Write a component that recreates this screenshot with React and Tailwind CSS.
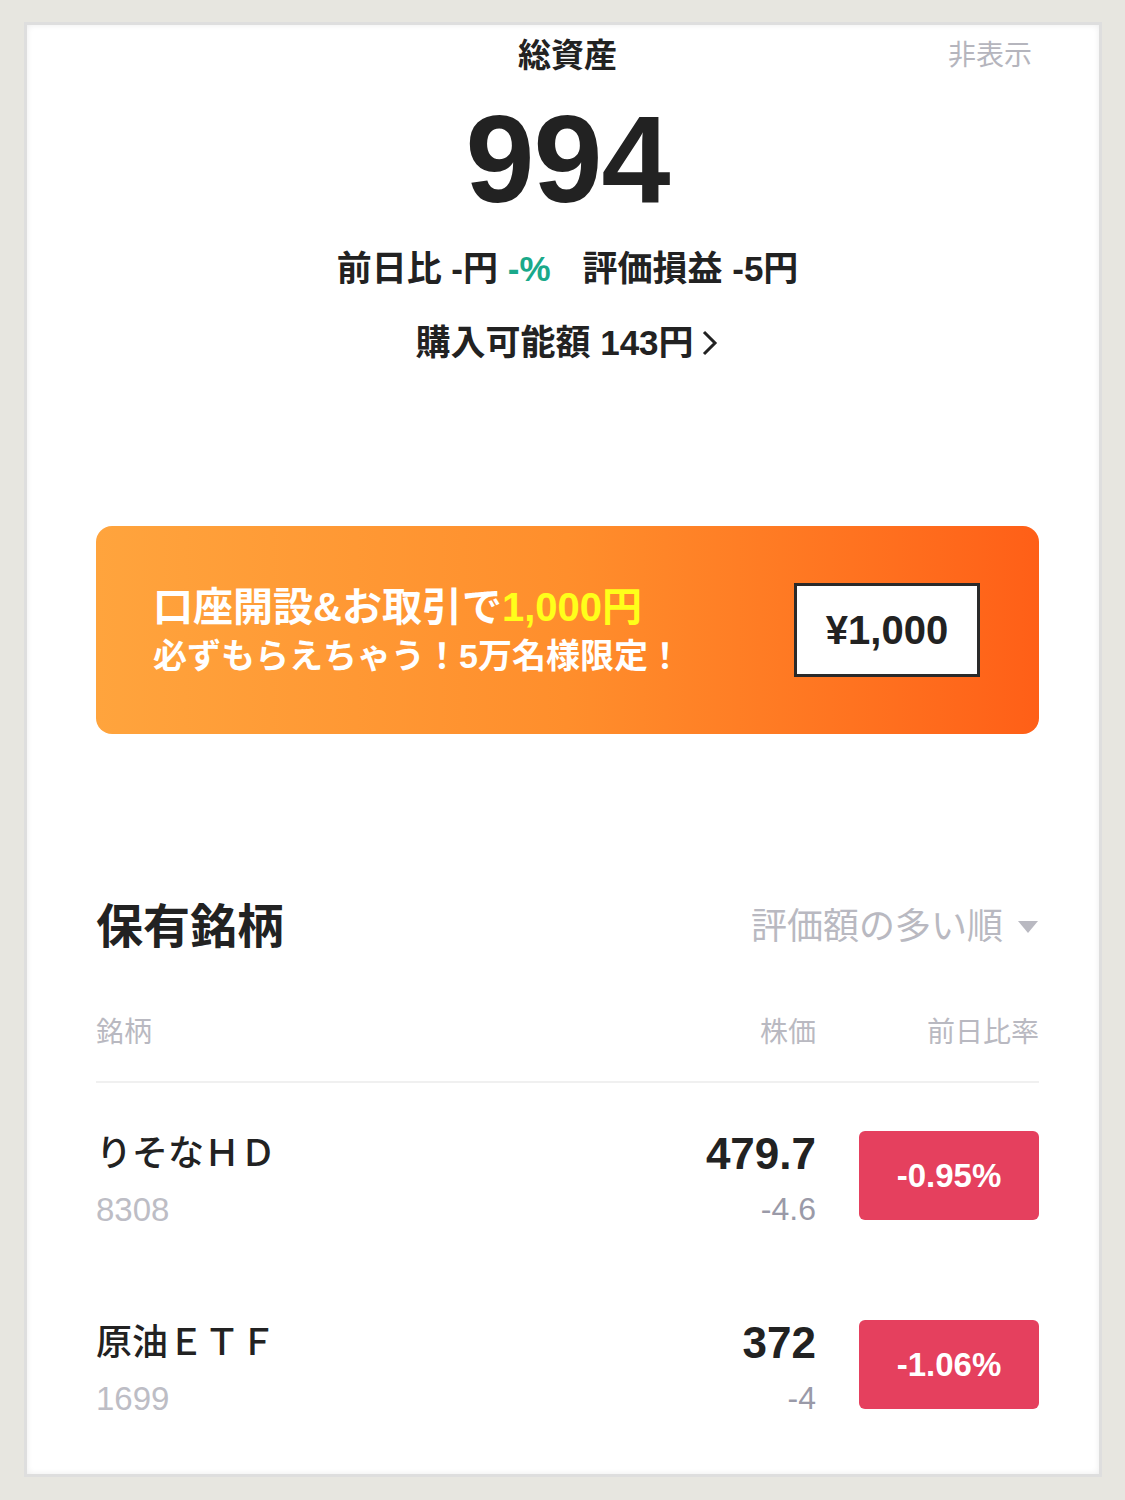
import React from 'react';

const jp = { fontFamily: '"Liberation Sans", "Noto Sans CJK JP", sans-serif' };

const holdings = [
  { name: 'りそなＨＤ', code: '8308', price: '479.7', diff: '-4.6', rate: '-0.95%' },
  { name: '原油ＥＴＦ', code: '1699', price: '372', diff: '-4', rate: '-1.06%' },
];

const HoldingRow = ({ h }) => (
  <div className="flex items-center h-[189px]">
    <div className="flex-1 mt-[10px]">
      <div className="text-[36px] leading-none font-medium text-[#222]">{h.name}</div>
      <div className="mt-[21px] text-[33px] leading-none text-[#bdbdc5]">{h.code}</div>
    </div>
    <div className="text-right mt-[6px]">
      <div className="text-[44px] leading-none font-bold text-[#222]">{h.price}</div>
      <div className="mt-[17px] text-[32px] leading-none text-[#9a9aa8]">{h.diff}</div>
    </div>
    <div className="ml-[43px] w-[180px] h-[89px] rounded-[6px] bg-[#e5405e] flex items-center justify-center text-white text-[33px] font-bold">
      {h.rate}
    </div>
  </div>
);

export default function App() {
  return (
    <div className="w-[1125px] h-[1500px] bg-[#e7e6e0] pt-[22px] pl-[24px]" style={jp}>
      <div className="w-[1078px] h-[1455px] bg-white border-[3px] border-[#dedede] shadow-[inset_0_0_6px_rgba(0,0,0,0.08)] pl-[69px] pr-[60px]">
        <div className="grid grid-cols-[1fr_auto_1fr] items-center pt-[14px]">
          <div />
          <div className="text-[33px] leading-none font-bold text-[#222]">総資産</div>
          <div className="text-right text-[28px] leading-none text-[#b5b5bd] pr-[7px]">非表示</div>
        </div>
        <div className="mt-[25px] text-center text-[124px] leading-none font-bold text-[#222] tracking-[-1px]">994</div>
        <div className="mt-[30px] flex justify-center text-[35px] leading-none font-bold text-[#222]">
          <span>前日比 -円 <span className="text-[#1aa98a]">-%</span></span>
          <span className="ml-[32px]">評価損益 -5円</span>
        </div>
        <div className="mt-[39px] flex justify-center items-center text-[35px] leading-none font-bold text-[#222]">
          <span>購入可能額 143円</span>
          <svg width="22" height="30" viewBox="0 0 22 30" className="ml-[4px]">
            <path d="M6 4 L17 15 L6 26" fill="none" stroke="#222" strokeWidth="3" />
          </svg>
        </div>

        <div className="mt-[166px] h-[208px] rounded-[16px] bg-gradient-to-r from-[#ffa43d] via-[#ff8e2c] to-[#ff5f17] flex items-center pl-[57px] pr-[59px]">
          <div className="flex-1 text-white font-semibold">
            <div className="text-[40px] leading-none">口座開設&お取引で<span className="text-[#ffff1a]">1,000円</span></div>
            <div className="mt-[12px] text-[34px] leading-none">必ずもらえちゃう！5万名様限定！</div>
          </div>
          <div className="w-[186px] h-[94px] bg-white border-[3px] border-[#2a2a2a] flex items-center justify-center text-[40px] font-bold text-[#222]">
            ¥1,000
          </div>
        </div>

        <div className="mt-[169px] flex items-center justify-between">
          <div className="text-[47px] leading-none font-bold text-[#222]">保有銘柄</div>
          <div className="flex items-center text-[36px] leading-none text-[#b9b9c1]">
            <span>評価額の多い順</span>
            <svg width="22" height="16" viewBox="0 0 22 16" className="ml-[14px]">
              <path d="M1 2 L21 2 L11 14 Z" fill="#b9b9c1" />
            </svg>
          </div>
        </div>

        <div className="mt-[69px] flex items-center text-[28px] leading-none text-[#b9b9c1]">
          <div className="flex-1">銘柄</div>
          <div>株価</div>
          <div className="w-[223px] text-right">前日比率</div>
        </div>
        <div className="mt-[34px] h-[2px] bg-[#f0f0f0]" />

        <div className="mt-[-2px]">
          {holdings.map(h => <HoldingRow key={h.code} h={h} />)}
        </div>
      </div>
    </div>
  );
}
